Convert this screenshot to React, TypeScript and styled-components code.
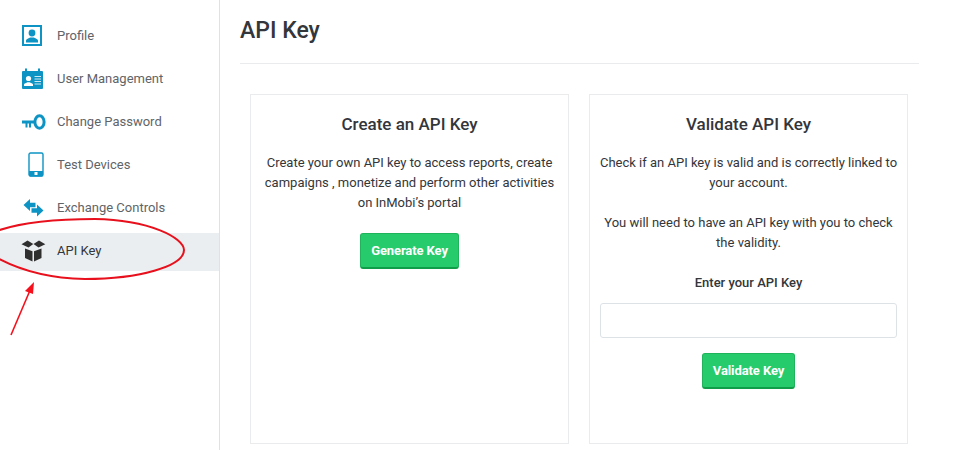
import React from "react"
import styled, { createGlobalStyle } from "styled-components"

const Global = createGlobalStyle`
  html, body {
    margin: 0;
    padding: 0;
    background: #fff;
    overflow: hidden;
  }
  body {
    font-family: Roboto, "Liberation Sans", sans-serif;
  }
`

const Page = styled.div`
  position: relative;
  display: flex;
  width: 977px;
  height: 450px;
  overflow: hidden;
`

const Sidebar = styled.nav`
  width: 219px;
  height: 432px;
  padding-top: 18px;
  border-right: 1px solid #dfe1e3;
  flex: none;
`

const NavRow = styled.div<{ $active?: boolean }>`
  display: flex;
  align-items: center;
  height: 35px;
  padding-bottom: 3px;
  margin-bottom: 5px;
  background: ${({ $active }) => ($active ? "#ebeef1" : "transparent")};
  color: ${({ $active }) => ($active ? "#33363a" : "#5f6468")};
  font-size: 13px;
`

const NavIcon = styled.span`
  width: 57px;
  height: 34px;
  flex: none;
  display: flex;
  align-items: center;
  padding-left: 22px;
  box-sizing: border-box;
`

const Main = styled.main`
  width: 679px;
  margin-left: 20px;
  flex: none;
`

const Title = styled.h1`
  margin: 0;
  height: 64px;
  box-sizing: border-box;
  padding-top: 17px;
  border-bottom: 1px solid #e9ebed;
  font-size: 23px;
  line-height: 28px;
  font-weight: 500;
  color: #33363a;
`

const Cards = styled.div`
  display: flex;
  gap: 20px;
  margin-top: 30px;
  margin-left: 10px;
`

const Card = styled.section`
  width: 319px;
  height: 350px;
  box-sizing: border-box;
  border: 1px solid #e9ebed;
  padding: 19px 10px 0;
  text-align: center;
  color: #33363a;
`

const CardTitle = styled.h2`
  margin: 0 0 18px;
  font-size: 17px;
  line-height: 21px;
  font-weight: 500;
  color: #33363a;
`

const Text = styled.p`
  margin: 0 -2px;
  font-size: 13px;
  line-height: 20px;
`

const KeyLabel = styled.label`
  display: block;
  margin-top: 20px;
  font-size: 13px;
  line-height: 20px;
  font-weight: 500;
`

const KeyInput = styled.input`
  display: block;
  width: 100%;
  height: 35px;
  box-sizing: border-box;
  margin-top: 10px;
  border: 1px solid #dde2e7;
  border-radius: 3px;
  background: #fff;
`

const Button = styled.button<{ $top: number }>`
  display: block;
  margin: ${({ $top }) => $top}px auto 0;
  height: 36px;
  padding: 0 10px;
  border: 1px solid #1fb45c;
  border-bottom: 2px solid #0f9d4a;
  border-radius: 3px;
  background: #26cb6c;
  color: #fff;
  font-family: Roboto, "Liberation Sans", sans-serif;
  font-size: 13px;
  letter-spacing: -0.1px;
  font-weight: 700;
`

const Annotation = styled.svg`
  position: absolute;
  left: 0;
  top: 0;
  pointer-events: none;
`

const blue = "#0d94c4"

const ProfileIcon = () => (
  <svg width="20" height="21" viewBox="0 0 20 21">
    <rect x="1" y="1" width="18" height="19" fill="none" stroke={blue} strokeWidth="2" />
    <circle cx="10" cy="8" r="3.4" fill={blue} />
    <path d="M4 17.500v-2c0-1.500 3-2.400 4.200-3h3.600c1.200.6 4.200 1.500 4.200 3v2z" fill={blue} />
  </svg>
)

const UserMgmtIcon = () => (
  <svg width="21" height="22" viewBox="0 0 21 22">
    <rect x="0" y="3" width="21" height="18" rx="1" fill={blue} />
    <rect x="3" y="0.5" width="2" height="4" fill={blue} />
    <rect x="16" y="0.5" width="2" height="4" fill={blue} />
    <circle cx="6.5" cy="10.5" r="2.6" fill="#fff" />
    <path d="M2 18v-1.500c0-1 2.500-1.800 3.400-2.300h2.200c.9.5 3.400 1.300 3.400 2.300V18z" fill="#fff" />
    <path d="M12.500 8.500H19M12.500 11H19M12.500 13.500H19M12.500 16H19" stroke="#fff" strokeWidth="1" opacity=".8" />
  </svg>
)

const KeyIcon = () => (
  <svg width="24" height="18" viewBox="0 0 24 18">
    <ellipse cx="17.500" cy="9" rx="4.600" ry="6.200" fill="none" stroke={blue} strokeWidth="3" />
    <path d="M0 7.500h13v3H9v4H7v-4H5.500v4h-2v-4H0z" fill={blue} />
  </svg>
)

const DeviceIcon = () => (
  <svg width="16" height="26" viewBox="0 0 16 26" style={{ marginLeft: 6 }}>
    <rect x="1" y="1" width="14" height="23" rx="1.500" fill="none" stroke={blue} strokeWidth="1.400" />
    <path d="M1 19h14v4a1.500 1.500 0 0 1-1.500 1.500h-11A1.500 1.500 0 0 1 1 23z" fill={blue} />
    <rect x="6.500" y="20" width="3" height="3" fill="#fff" />
  </svg>
)

const ExchangeIcon = () => (
  <svg width="21" height="20" viewBox="0 0 21 20" style={{ marginLeft: 1 }}>
    <path d="M0.500 7 L7 1v3.800h5.500v4.400H7V13z" fill={blue} />
    <path d="M20.500 12.500 L14 18.500v-3.800H8.500v-4.400H14V6.500z" fill={blue} />
  </svg>
)

const BoxIcon = () => (
  <svg width="25" height="22" viewBox="0 0 25 22" style={{ marginLeft: -1 }}>
    <path d="M6.500 0.500L12.300 4 7.500 7.500 0.500 4.200z" fill="#2f2f2f" />
    <path d="M18 0.500L12.500 4l5 3.500 6.800-3.300z" fill="#2f2f2f" />
    <path d="M4 8.500l7.500 2.800V21.500L4 18z" fill="#2f2f2f" />
    <path d="M20.500 8.500l-7.500 2.800V21.500l7.500-3.500z" fill="#2f2f2f" />
  </svg>
)

const navItems = [
  { label: "Profile", icon: <ProfileIcon /> },
  { label: "User Management", icon: <UserMgmtIcon /> },
  { label: "Change Password", icon: <KeyIcon /> },
  { label: "Test Devices", icon: <DeviceIcon /> },
  { label: "Exchange Controls", icon: <ExchangeIcon /> },
  { label: "API Key", icon: <BoxIcon />, active: true },
]

export default function App() {
  return (
    <Page>
      <Global />
      <Sidebar>
        {navItems.map((item) => (
          <NavRow key={item.label} $active={item.active}>
            <NavIcon>{item.icon}</NavIcon>
            {item.label}
          </NavRow>
        ))}
      </Sidebar>
      <Main>
        <Title>API Key</Title>
        <Cards>
          <Card>
            <CardTitle>Create an API Key</CardTitle>
            <Text>
              Create your own API key to access reports, create campaigns , monetize and perform other activities on InMobi’s portal
            </Text>
            <Button $top={20}>Generate Key</Button>
          </Card>
          <Card>
            <CardTitle>Validate API Key</CardTitle>
            <Text>Check if an API key is valid and is correctly linked to your account.</Text>
            <Text>&nbsp;</Text>
            <Text>You will need to have an API key with you to check the validity.</Text>
            <KeyLabel>Enter your API Key</KeyLabel>
            <KeyInput />
            <Button $top={15}>Validate Key</Button>
          </Card>
        </Cards>
      </Main>
      <Annotation width="977" height="450" viewBox="0 0 977 450">
        <path
          d="M-6 232 C 20 222, 60 219, 95 219 C 150 220, 184 238, 184 250 C 184 266, 140 279, 85 279 C 45 278, 15 268, -6 256"
          fill="none"
          stroke="#e8101c"
          strokeWidth="2"
        />
        <path d="M11 335 L31 288" stroke="#f5101c" strokeWidth="1.600" fill="none" />
        <path d="M34 282 L25 291 L33 294 z" fill="#f5101c" />
      </Annotation>
    </Page>
  )
}
